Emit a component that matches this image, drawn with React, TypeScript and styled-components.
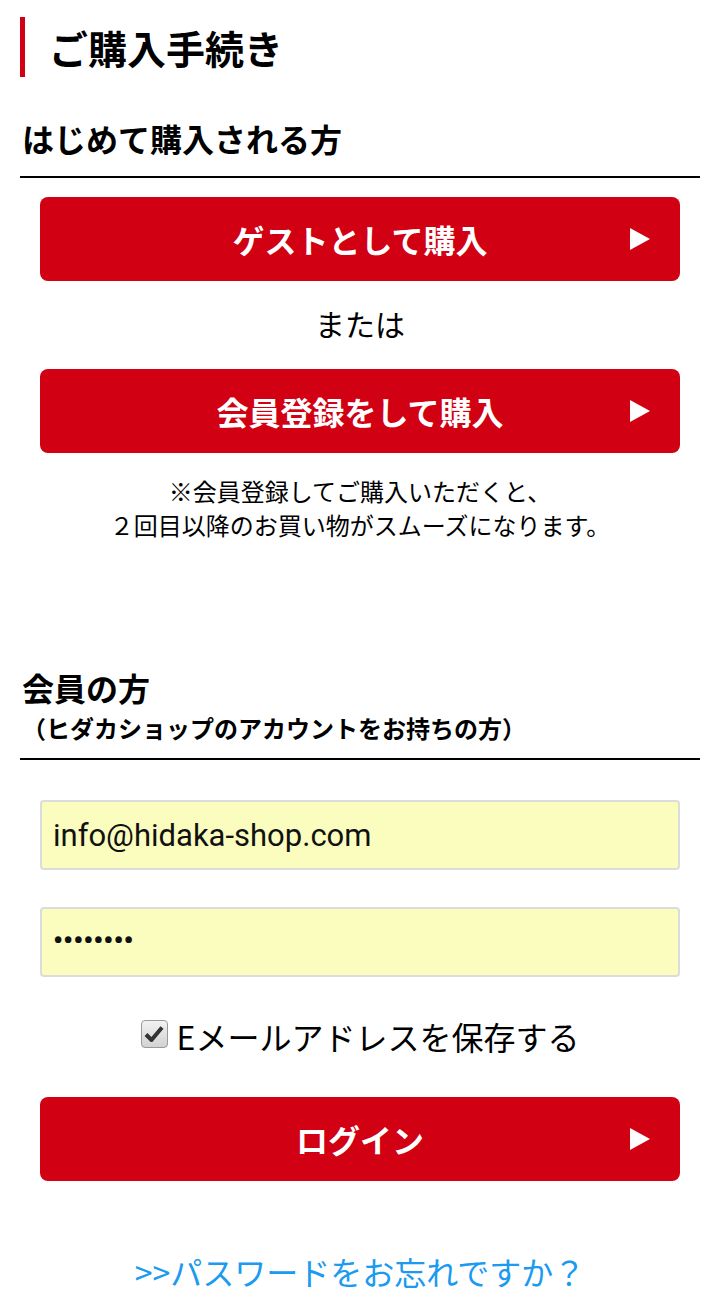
import styled, { createGlobalStyle } from "styled-components";

const GlobalStyle = createGlobalStyle`
  body {
    margin: 0;
    background: #fff;
    font-family: "Noto Sans CJK JP", "Noto Sans", sans-serif;
    color: #000;
  }
`;

const Page = styled.div`
  width: 720px;
  padding: 17px 20px 0;
  box-sizing: border-box;
`;

const PageTitle = styled.h1`
  margin: 0;
  border-left: 5px solid #d10012;
  padding-left: 24px;
  height: 60px;
  display: flex;
  align-items: center;
  font-size: 39px;
  font-weight: 700;
`;

const Section = styled.section<{ $top: number }>`
  margin-top: ${(p) => p.$top}px;
`;

const SectionHead = styled.div`
  border-bottom: 2px solid #000;
  padding: 0 2px 15px;
`;

const SectionTitle = styled.h2`
  margin: 0;
  font-size: 32px;
  font-weight: 700;
  line-height: 46px;
`;

const SectionSub = styled.div`
  font-size: 24px;
  font-weight: 700;
  line-height: 30px;
  margin-top: 3px;
`;

const Inner = styled.div`
  padding: 0 20px;
  display: flex;
  flex-direction: column;
  align-items: stretch;
`;

const RedButton = styled.button<{ $top: number }>`
  position: relative;
  margin-top: ${(p) => p.$top}px;
  height: 84px;
  border: none;
  border-radius: 8px;
  background: #d10012;
  color: #fff;
  font-family: "Noto Sans CJK JP", sans-serif;
  font-size: 32px;
  font-weight: 700;
  display: flex;
  align-items: center;
  justify-content: center;
  cursor: pointer;

  svg {
    position: absolute;
    right: 30px;
    top: 50%;
    transform: translateY(-50%);
  }
`;

const Or = styled.div`
  text-align: center;
  font-size: 30px;
  line-height: 42px;
  margin-top: 21px;
`;

const Note = styled.p`
  margin: 21px 0 0;
  text-align: center;
  font-size: 24px;
  line-height: 34px;
`;

const Field = styled.div<{ $top: number }>`
  margin-top: ${(p) => p.$top}px;
  height: 70px;
  box-sizing: border-box;
  background: #fafdbd;
  border: 2px solid #dcdcdc;
  border-radius: 4px;
  padding: 0 11px;
  display: flex;
  align-items: center;
  font-family: Roboto, "Noto Sans", sans-serif;
  font-size: 31px;
  color: #111;
`;

const Dots = styled.span`
  font-size: 28px;
  font-weight: 700;
  padding-bottom: 4px;
`;

const CheckRow = styled.label`
  margin-top: 37px;
  display: flex;
  align-items: center;
  justify-content: center;
  gap: 9px;
  font-size: 32px;
  line-height: 44px;
`;

const CheckBox = styled.span`
  width: 27px;
  height: 28px;
  box-sizing: border-box;
  border: 1px solid #9a9a9a;
  border-radius: 4px;
  background: linear-gradient(#f2f2f2, #d2d2d2);
  display: flex;
  align-items: center;
  justify-content: center;
  margin-top: -4px;
`;

const ForgotLink = styled.a`
  display: block;
  text-align: center;
  margin-top: 68px;
  font-size: 32px;
  line-height: 44px;
  color: #1a9af0;
  text-decoration: none;
`;

const Arrow = () => (
  <svg width="20" height="22" viewBox="0 0 20 22">
    <polygon points="0,0 20,11 0,22" fill="#fff" />
  </svg>
);

export default function App() {
  return (
    <>
      <GlobalStyle />
      <Page>
        <PageTitle>ご購入手続き</PageTitle>

        <Section $top={38}>
          <SectionHead>
            <SectionTitle>はじめて購入される方</SectionTitle>
          </SectionHead>
          <Inner>
            <RedButton $top={19}>
              ゲストとして購入
              <Arrow />
            </RedButton>
            <Or>または</Or>
            <RedButton $top={25}>
              会員登録をして購入
              <Arrow />
            </RedButton>
            <Note>
              ※会員登録してご購入いただくと、
              <br />
              ２回目以降のお買い物がスムーズになります。
            </Note>
          </Inner>
        </Section>

        <Section $top={122}>
          <SectionHead>
            <SectionTitle>会員の方</SectionTitle>
            <SectionSub>（ヒダカショップのアカウントをお持ちの方）</SectionSub>
          </SectionHead>
          <Inner>
            <Field $top={40}>info@hidaka-shop.com</Field>
            <Field $top={37}>
              <Dots>••••••••</Dots>
            </Field>
            <CheckRow>
              <CheckBox>
                <svg width="20" height="18" viewBox="0 0 20 18">
                  <path
                    d="M2 9.5 L7.5 15 L18 2.5"
                    stroke="#333"
                    strokeWidth="4"
                    fill="none"
                    strokeLinejoin="round"
                  />
                </svg>
              </CheckBox>
              Eメールアドレスを保存する
            </CheckRow>
            <RedButton $top={39}>
              ログイン
              <Arrow />
            </RedButton>
          </Inner>
          <ForgotLink href="#">&gt;&gt;パスワードをお忘れですか？</ForgotLink>
        </Section>
      </Page>
    </>
  );
}
